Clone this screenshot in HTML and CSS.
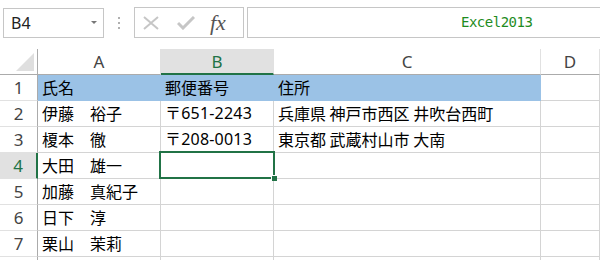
FILE: index.html
```html
<!DOCTYPE html>
<html lang="ja">
<head>
  <meta charset="UTF-8">
  <title>Excel2013</title>
  <link rel="stylesheet" href="styles.css">
</head>
<body>

<div class="toolbar">
  <div class="namebox">
    <span>B4</span>
    <span class="arrow"></span>
  </div>
  <div class="dots"><i></i><i></i><i></i></div>
  <div class="fxbox">
    <svg width="18" height="14" viewBox="0 0 18 14">
      <path d="M2 1 L16 13 M16 1 L2 13" stroke="#c6c6c6" stroke-width="2" fill="none"/>
    </svg>
    <svg width="18" height="14" viewBox="0 0 18 14">
      <path d="M1 7 L6 12 L17 1" stroke="#c6c6c6" stroke-width="3" fill="none"/>
    </svg>
    <span class="fx">fx</span>
  </div>
  <div class="formula">Excel2013</div>
</div>

<div class="sheet">
  <div class="cell head corner"><span class="tri"></span></div>
  <div class="cell head">A</div>
  <div class="cell head active-col">B</div>
  <div class="cell head">C</div>
  <div class="cell head">D</div>

  <div class="cell rowhead">1</div>
  <div class="cell fill">氏名</div>
  <div class="cell fill">郵便番号</div>
  <div class="cell fill">住所</div>
  <div class="cell"></div>

  <div class="cell rowhead">2</div>
  <div class="cell">伊藤　裕子</div>
  <div class="cell num">〒651-2243</div>
  <div class="cell">兵庫県 神戸市西区 井吹台西町</div>
  <div class="cell"></div>

  <div class="cell rowhead">3</div>
  <div class="cell">榎本　徹</div>
  <div class="cell num">〒208-0013</div>
  <div class="cell">東京都 武蔵村山市 大南</div>
  <div class="cell"></div>

  <div class="cell rowhead active-row">4</div>
  <div class="cell">大田　雄一</div>
  <div class="cell selected"></div>
  <div class="cell"></div>
  <div class="cell"></div>

  <div class="cell rowhead">5</div>
  <div class="cell">加藤　真紀子</div>
  <div class="cell"></div>
  <div class="cell"></div>
  <div class="cell"></div>

  <div class="cell rowhead">6</div>
  <div class="cell">日下　淳</div>
  <div class="cell"></div>
  <div class="cell"></div>
  <div class="cell"></div>

  <div class="cell rowhead">7</div>
  <div class="cell">栗山　茉莉</div>
  <div class="cell"></div>
  <div class="cell"></div>
  <div class="cell"></div>

  <div class="cell rowhead"></div>
  <div class="cell"></div>
  <div class="cell"></div>
  <div class="cell"></div>
  <div class="cell"></div>
</div>

</body>
</html>
```

FILE: styles.css
```css
body {
  margin: 0;
  background-color: #ffffff;
  font-family: "Noto Sans CJK JP", sans-serif;
  overflow: hidden;
}
.toolbar {
  display: flex;
  align-items: center;
  padding: 7px 0 0 3px;
  height: 31px;
}
.namebox {
  box-sizing: border-box;
  width: 101px;
  height: 30px;
  border: 1px solid #c6c6c6;
  display: flex;
  align-items: center;
  justify-content: space-between;
  padding: 0 6px 0 7px;
  font-family: "Noto Sans", sans-serif;
  font-size: 16px;
  color: #222;
}
.arrow {
  width: 0;
  height: 0;
  border-left: 3px solid transparent;
  border-right: 3px solid transparent;
  border-top: 3px solid #777;
}
.dots {
  display: flex;
  flex-direction: column;
  gap: 3px;
  margin: 0 14px 0 14px;
}
.dots i {
  width: 2px;
  height: 2px;
  background-color: #b0b0b0;
}
.fxbox {
  box-sizing: border-box;
  width: 110px;
  height: 31px;
  border: 1px solid #c6c6c6;
  display: flex;
  align-items: center;
  gap: 17px;
  padding-left: 7px;
}
.fx {
  font-family: "Liberation Serif", serif;
  font-style: italic;
  font-size: 22px;
  color: #555;
  margin-left: -2px;
}
.formula {
  box-sizing: border-box;
  flex: 1;
  height: 31px;
  margin-left: 3px;
  border-top: 1px solid #c6c6c6;
  border-bottom: 1px solid #c6c6c6;
  border-left: 1px solid #c6c6c6;
  padding-left: 213px;
  line-height: 29px;
  font-family: "DejaVu Sans Mono", monospace;
  font-size: 14px;
  letter-spacing: -0.5px;
  color: #1e8c1e;
}
.sheet {
  margin-top: 11px;
  display: grid;
  grid-template-columns: 38px 123px 113px 267px 1fr;
  grid-auto-rows: 26px;
}
.cell {
  box-sizing: border-box;
  border-right: 1px solid #d4d4d4;
  border-bottom: 1px solid #d4d4d4;
  padding-left: 4px;
  font-size: 16px;
  line-height: 25px;
  color: #000;
  white-space: nowrap;
  position: relative;
}
.num {
  font-family: "Noto Sans", "Noto Sans CJK JP", sans-serif;
  letter-spacing: 0.2px;
}
.head {
  text-align: center;
  padding-left: 0;
  font-family: "Noto Sans", sans-serif;
  font-size: 17px;
  color: #444;
  border-right-color: #e1e1e1;
  border-bottom-color: #ababab;
}
.corner {
  border-right-color: #ababab;
}
.tri {
  position: absolute;
  right: 3px;
  bottom: 3px;
  width: 0;
  height: 0;
  border-left: 18px solid transparent;
  border-bottom: 18px solid #dfdfdf;
}
.active-col {
  background-color: #e1e1e1;
  color: #217346;
  border-bottom: 2px solid #217346;
}
.rowhead {
  text-align: center;
  padding-left: 0;
  font-family: "Noto Sans", sans-serif;
  font-size: 17px;
  color: #444;
  border-right-color: #ababab;
  border-bottom-color: #e1e1e1;
}
.active-row {
  background-color: #e1e1e1;
  color: #217346;
  border-right: 2px solid #217346;
}
.fill {
  background-color: #9bc2e6;
  border-right-color: #9bc2e6;
  border-bottom-color: #9bc2e6;
}
.selected::after {
  content: "";
  position: absolute;
  left: -2px;
  top: -2px;
  right: -2px;
  bottom: -1px;
  border: 2px solid #217346;
}
.selected::before {
  content: "";
  position: absolute;
  right: -4px;
  bottom: -3px;
  width: 5px;
  height: 5px;
  background-color: #217346;
  border-left: 1px solid #fff;
  border-top: 1px solid #fff;
  z-index: 1;
}
```
